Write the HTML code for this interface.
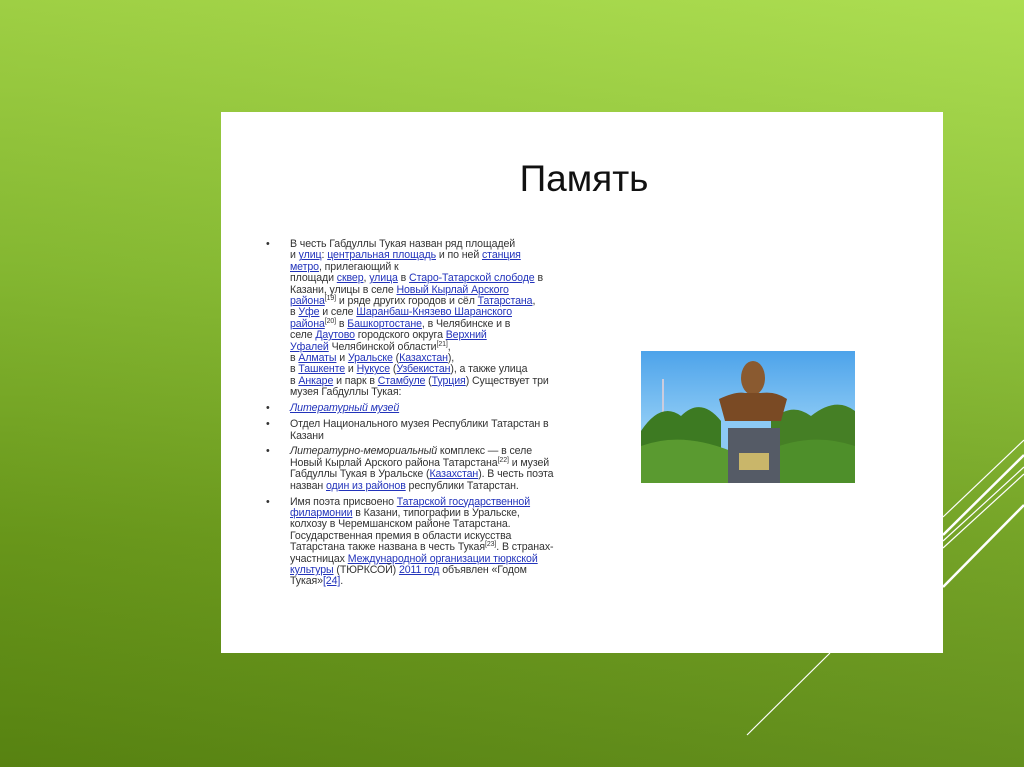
<!DOCTYPE html>
<html><head><meta charset="utf-8"><style>
html,body{margin:0;padding:0}
body{width:1024px;height:767px;overflow:hidden;position:relative;font-family:"Liberation Sans","DejaVu Sans",sans-serif;
background:linear-gradient(180deg,#a8dc48 0%,#8cc234 35%,#6e9f1c 70%,#5c8a12 100%);}
.bg2{position:absolute;inset:0;background:linear-gradient(90deg,rgba(0,0,0,0.06),rgba(255,255,255,0.05));}
.box{position:absolute;left:221px;top:112px;width:722px;height:541px;background:#fff;}
h1{position:absolute;left:221px;width:722px;top:158px;margin:0;text-align:center;font-weight:normal;font-size:37px;color:#111;padding-left:2px}
.txt{position:absolute;left:266px;top:239px;width:300px;font-size:10.6px;line-height:11.4px;color:#333;white-space:nowrap;letter-spacing:-0.1px}
.txt ul{margin:0;padding:0;list-style:none}
.txt li{position:relative;padding-left:24px;margin-bottom:4.5px}
.txt li:before{content:"•";position:absolute;left:0;top:0}
a{color:#2233bb;text-decoration:underline}
sup{font-size:7px;line-height:0;vertical-align:baseline;position:relative;top:-4px}
.pic{position:absolute;left:641px;top:351px;width:214px;height:132px;overflow:hidden;background:linear-gradient(180deg,#4da3ea,#8ccaf5 55%);}
</style></head><body>
<div class="bg2"></div>
<svg width="1024" height="767" style="position:absolute;left:0;top:0">
<g stroke="#fff" fill="none">
<line x1="943" y1="517" x2="1024" y2="440" stroke-width="1.2"/>
<line x1="943" y1="535" x2="1024" y2="455" stroke-width="2.5"/>
<line x1="943" y1="541" x2="1024" y2="467" stroke-width="1.2"/>
<line x1="943" y1="548" x2="1024" y2="474" stroke-width="1.2"/>
<line x1="943" y1="587" x2="1024" y2="505" stroke-width="2.5"/>
<line x1="747" y1="735" x2="830" y2="653" stroke-width="1.2"/>
</g></svg>
<div class="box"></div>
<h1>Память</h1>
<div class="txt"><ul>
<li>В честь Габдуллы Тукая назван ряд площадей<br>и <a>улиц</a>: <a>центральная площадь</a> и по ней <a>станция</a><br><a>метро</a>, прилегающий к<br>площади <a>сквер</a>, <a>улица</a> в <a>Старо-Татарской слободе</a> в<br>Казани, улицы в селе <a>Новый Кырлай Арского</a><br><a>района</a><sup>[19]</sup> и ряде других городов и сёл <a>Татарстана</a>,<br>в <a>Уфе</a> и селе <a>Шаранбаш-Князево Шаранского</a><br><a>района</a><sup>[20]</sup> в <a>Башкортостане</a>, в Челябинске и в<br>селе <a>Даутово</a> городского округа <a>Верхний</a><br><a>Уфалей</a> Челябинской области<sup>[21]</sup>,<br>в <a>Алматы</a> и <a>Уральске</a> (<a>Казахстан</a>),<br>в <a>Ташкенте</a> и <a>Нукусе</a> (<a>Узбекистан</a>), а также улица<br>в <a>Анкаре</a> и парк в <a>Стамбуле</a> (<a>Турция</a>) Существует три<br>музея Габдуллы Тукая:</li>
<li><a><i>Литературный музей</i></a></li>
<li>Отдел Национального музея Республики Татарстан в<br>Казани</li>
<li><i>Литературно-мемориальный</i> комплекс — в селе<br>Новый Кырлай Арского района Татарстана<sup>[22]</sup> и музей<br>Габдуллы Тукая в Уральске (<a>Казахстан</a>). В честь поэта<br>назван <a>один из районов</a> республики Татарстан.</li>
<li>Имя поэта присвоено <a>Татарской государственной</a><br><a>филармонии</a> в Казани, типографии в Уральске,<br>колхозу в Черемшанском районе Татарстана.<br>Государственная премия в области искусства<br>Татарстана также названа в честь Тукая<sup>[23]</sup>. В странах-<br>участницах <a>Международной организации тюркской</a><br><a>культуры</a> (ТЮРКСОЙ) <a>2011 год</a> объявлен «Годом<br>Тукая»<a>[24]</a>.</li>
</ul></div>
<div class="pic">
<svg width="214" height="132">
<line x1="22" y1="28" x2="22" y2="70" stroke="#ccd" stroke-width="2"/>
<path d="M0,80 Q20,50 40,65 Q60,45 80,70 L80,132 L0,132Z" fill="#3d7a22"/>
<path d="M130,70 Q150,50 170,65 Q195,45 214,60 L214,132 L130,132Z" fill="#457f25"/>
<path d="M0,95 Q40,80 90,100 L90,132 L0,132Z" fill="#5a9a30"/>
<path d="M125,100 Q170,80 214,95 L214,132 L125,132Z" fill="#4e8f2a"/>
<ellipse cx="112" cy="27" rx="12" ry="17" fill="#8a5a30"/>
<path d="M78,48 Q95,40 104,42 L120,42 Q135,40 146,48 L140,70 L84,70Z" fill="#7a4a24"/>
<rect x="87" y="77" width="52" height="55" fill="#555b66"/>
<rect x="98" y="102" width="30" height="17" fill="#c9b66a"/>
</svg></div>
</body></html>
